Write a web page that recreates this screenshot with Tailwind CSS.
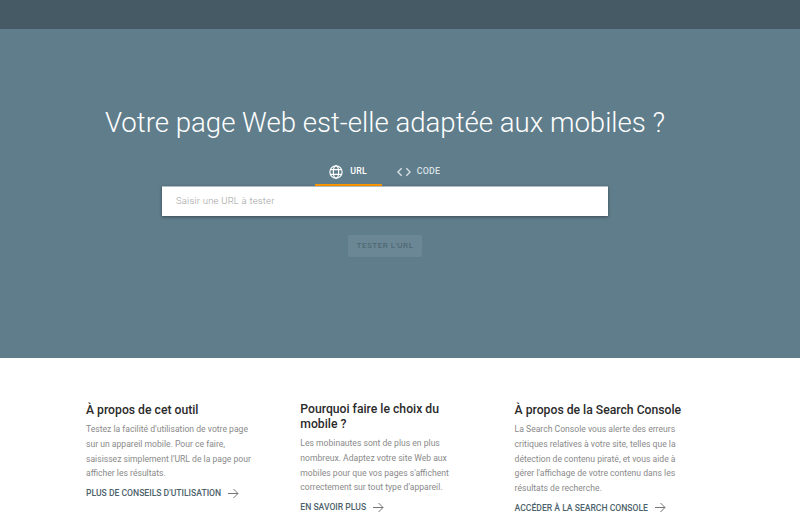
<!doctype html>
<html lang="fr">
<head>
<meta charset="utf-8">
<script src="https://cdn.jsdelivr.net/npm/@tailwindcss/browser@4"></script>
</head>
<body class="font-['Roboto',sans-serif] bg-white h-[530px] overflow-hidden">
<header class="h-[29px] bg-[#455a64]"></header>
<section class="h-[329px] bg-[#607d8b] pr-[30px]">
  <div class="flex flex-col items-center">
    <h1 class="mt-[75px] text-[27.6px] leading-[38px] font-light text-white whitespace-nowrap">Votre page Web est-elle adaptée aux mobiles ?</h1>
    <div class="mt-[10px] flex h-[34px] text-[8.8px] font-medium tracking-[0.3px]">
      <div class="w-[67px] flex items-center justify-center gap-[7px] text-white border-b-2 border-[#ff9800] pt-[8px]">
        <svg class="w-[14px] h-[14px]" viewBox="0 0 24 24" fill="none" stroke="currentColor" stroke-width="2"><circle cx="12" cy="12" r="10.5"/><ellipse cx="12" cy="12" rx="4.5" ry="10.5"/><path d="M2 8h20M2 16h20"/></svg>
        <span>URL</span>
      </div>
      <div class="px-[15px] flex items-center gap-[6px] text-[#dbe2e6] border-b-2 border-transparent pt-[8px]">
        <svg class="w-[14px] h-[14px]" viewBox="0 0 24 24" fill="none" stroke="currentColor" stroke-width="2.2"><path d="M8 5.500 1.500 12 8 18.500M16 5.500 22.500 12 16 18.500"/></svg>
        <span>CODE</span>
      </div>
    </div>
    <div class="w-[446px] h-[30px] bg-white border-t border-[#b0bec5] shadow-[0_1px_3px_rgba(0,0,0,0.4)] flex items-center pl-[14px] text-[9.5px] font-light text-[#9e9e9e] tracking-[0.2px]">Saisir une URL à tester</div>
    <div class="mt-[19px] w-[74px] h-[22px] rounded-[2px] bg-[#6b8795] flex items-center justify-center text-[8px] font-medium tracking-[0.5px] text-[#4f6773]">TESTER L'URL</div>
  </div>
</section>
<section class="grid grid-cols-[214.300px_214.300px_200px] pl-[86px] pt-[44px]">
  <article class="w-[172px]">
    <h2 class="text-[12.200px] leading-[16px] font-medium text-[#2a2a2a] whitespace-nowrap">À propos de cet outil</h2>
    <p class="mt-[4px] text-[8.600px] leading-[14.800px] text-[#8a8a8a]">Testez la facilité d'utilisation de votre page sur un appareil mobile. Pour ce faire, saisissez simplement l'URL de la page pour afficher les résultats.</p>
    <a class="mt-[5px] flex items-center gap-[7px] text-[8.600px] leading-[14px] font-medium text-[#4d626c] whitespace-nowrap">PLUS DE CONSEILS D'UTILISATION
      <svg class="w-[11px] h-[11px]" viewBox="0 0 11 11" fill="none" stroke="#757575" stroke-width="1"><path d="M0 5.500h10M5.500 1l4.500 4.500L5.500 10"/></svg></a>
  </article>
  <article class="w-[172px]">
    <h2 class="text-[12.200px] leading-[15px] font-medium text-[#2a2a2a]">Pourquoi faire le choix du mobile ?</h2>
    <p class="mt-[4px] text-[8.600px] leading-[14.800px] text-[#8a8a8a]">Les mobinautes sont de plus en plus nombreux. Adaptez votre site Web aux mobiles pour que vos pages s'affichent correctement sur tout type d'appareil.</p>
    <a class="mt-[5px] flex items-center gap-[7px] text-[8.600px] leading-[14px] font-medium text-[#4d626c] whitespace-nowrap">EN SAVOIR PLUS
      <svg class="w-[11px] h-[11px]" viewBox="0 0 11 11" fill="none" stroke="#757575" stroke-width="1"><path d="M0 5.500h10M5.500 1l4.500 4.500L5.500 10"/></svg></a>
  </article>
  <article class="w-[172px]">
    <h2 class="text-[12.200px] leading-[16px] font-medium text-[#2a2a2a] whitespace-nowrap">À propos de la Search Console</h2>
    <p class="mt-[4px] text-[8.600px] leading-[14.800px] text-[#8a8a8a]">La Search Console vous alerte des erreurs critiques relatives à votre site, telles que la détection de contenu piraté, et vous aide à gérer l'affichage de votre contenu dans les résultats de recherche.</p>
    <a class="mt-[5px] flex items-center gap-[7px] text-[8.600px] leading-[14px] font-medium text-[#4d626c] whitespace-nowrap">ACCÉDER À LA SEARCH CONSOLE
      <svg class="w-[11px] h-[11px]" viewBox="0 0 11 11" fill="none" stroke="#757575" stroke-width="1"><path d="M0 5.500h10M5.500 1l4.500 4.500L5.500 10"/></svg></a>
  </article>
</section>
</body>
</html>
